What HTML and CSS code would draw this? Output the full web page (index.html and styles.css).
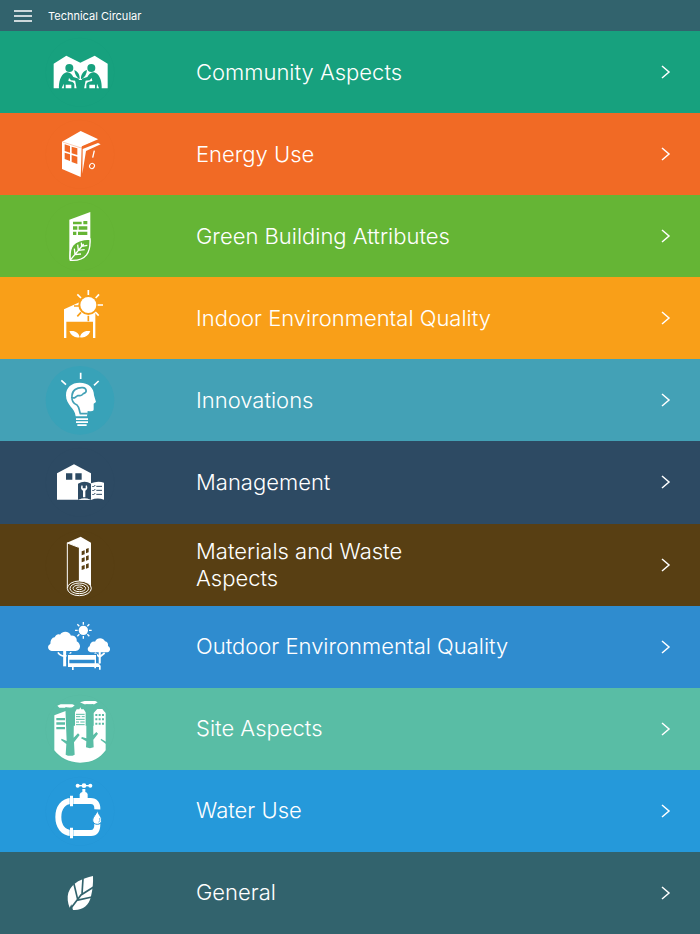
FILE: index.html
```html
<!DOCTYPE html>
<html lang="en">
<head>
  <meta charset="UTF-8">
  <meta name="viewport" content="width=device-width, initial-scale=1.0">
  <title>Technical Circular</title>
  <link rel="stylesheet" href="styles.css">
</head>
<body>
  <header class="topbar">
    <button class="menu-btn" type="button" aria-label="Menu">
      <svg width="20" height="14" viewBox="0 0 20 14">
        <path d="M1 2h18M1 7h18M1 12h18" stroke="#fff" stroke-width="1.5" />
      </svg>
    </button>
    <h1 class="title">Technical Circular</h1>
  </header>

  <main class="categories">
    <a class="category community" href="#community">
      <svg class="icon" viewBox="0 0 300 246">
        <circle class="badge" cx="150" cy="124" r="103" />
        <path class="fg" d="M71 172V98L109 74l42 21 43-21 39 24v74z" />
        <g class="bg">
          <circle cx="118" cy="111" r="12" />
          <circle cx="184" cy="111" r="12" />
          <path d="M87 174c-1-20 4-42 19-49 12-5 19 3 24 13l17 5-2 7-22-2-6-7-2 9c11 1 17 4 18 10v14h-9v-13h-17v13z" />
          <path d="M215 174c1-20-4-42-19-49-12-5-19 3-24 13l-17 5 2 7 22-2 6-7 2 9c-11 1-17 4-18 10v14h9v-13h17v13z" />
          <path d="M149 145c-10-7-15-17-16-28 11 5 17 14 16 28zM153 145c-1-14 6-24 18-28-1 13-7 23-18 28z" />
          <path d="M135 147h32l-5 27h-22z" />
        </g>
        <path class="fg" d="M102 172l-1-14-6 14zM200 172l1-14 6 14z" />
      </svg>
      <span class="label">Community Aspects</span>
      <svg class="chevron" viewBox="0 0 10 16"><path d="M1 2l7 6-7 6" /></svg>
    </a>

    <a class="category energy" href="#energy">
      <svg class="icon" viewBox="0 0 300 246">
        <circle class="badge" cx="150" cy="124" r="103" />
        <path class="fg" d="M96 86l56-32 53 25-49 21-4 92-56-24z" />
        <path class="line-bg" d="M98 87l53 17 53-24" stroke-width="1" />
        <path class="bg" d="M104 94l16 5v20l-16-5zM125 101l17 5v20l-17-5zM104 119l16 5v20l-16-6zM125 126l17 5v22l-17-6z" />
        <path class="bg" d="M155 102l49-17v12l-33 13-14 80h-2z" />
        <path class="fg" d="M158 108l46-18 8 4-44 20-11 68z" />
        <path class="line-fg" d="M193 113l-5 21" stroke-width="4" />
        <ellipse class="line-fg" cx="186" cy="159" rx="7" ry="8" stroke-width="3" transform="rotate(35 186 159)" />
      </svg>
      <span class="label">Energy Use</span>
      <svg class="chevron" viewBox="0 0 10 16"><path d="M1 2l7 6-7 6" /></svg>
    </a>

    <a class="category green" href="#green">
      <svg class="icon" viewBox="0 0 300 246">
        <circle class="badge" cx="150" cy="124" r="103" />
        <path class="fg" d="M118 74l63-23v90l-5 30-54 25-4-3z" />
        <path class="bg" d="M129 80h26v8h-26zM160 78h12v10h-12zM129 94h13v10h-13zM146 94h26v10h-26zM129 110h10v10h-10zM144 110h28v10h-28z" />
        <path class="leaf" d="M121 196c-4-40 5-61 59-64 2 39-10 67-59 64z" stroke-width="4" />
        <path class="line-fg" d="M122 194l39-47M135 179l-2-18M135 179l18-2M145 166l-2-17M145 166l19-2M155 154l-1-11M155 154l17-3" stroke-width="4" />
      </svg>
      <span class="label">Green Building Attributes</span>
      <svg class="chevron" viewBox="0 0 10 16"><path d="M1 2l7 6-7 6" /></svg>
    </a>

    <a class="category indoor" href="#indoor">
      <svg class="icon" viewBox="0 0 300 246">
        <path class="fg" d="M102 97l48-22 46 15v93h-7v-49h-80v49h-7z" />
        <circle class="bg" cx="175" cy="84" r="30" />
        <circle class="fg" cx="175" cy="84" r="24" />
        <path class="line-fg" d="M175 39v15M207 52l-10 11M219 84h-16M206 116l-10-11M142 52l11 11" stroke-width="5" />
        <path class="line-bg" d="M175 116v17M132 87h17M142 118l11-12" stroke-width="5" />
        <path class="fg" d="M118 163c17-3 28 4 31 18-14 3-25-4-31-18zM181 163c-17-3-28 4-31 18 14 3 25-4 31-18z" />
      </svg>
      <span class="label">Indoor Environmental Quality</span>
      <svg class="chevron" viewBox="0 0 10 16"><path d="M1 2l7 6-7 6" /></svg>
    </a>

    <a class="category innovations" href="#innovations">
      <svg class="icon" viewBox="0 0 300 246">
        <circle class="disc" cx="150" cy="124" r="103" />
        <path class="line-fg" d="M152 41v19M94 64l14 13M206 66l-14 13" stroke-width="5" />
        <path class="fg" d="M108 109c0-24 17-38 41-38 27 0 43 16 43 38l6 20-7 5v17c0 6-5 7-18 5l-2 16h-34c-2-25-29-33-29-63z" />
        <path class="cut" d="M173 164h-22c-5-15-3-19-10-26-12-5-17-14-15-29 1-15 14-24 32-23 12 1 14 14 4 17-5 2-5 7-12 7h-7l-10 7-10-2" stroke-width="5" />
        <path class="fg" d="M138 178h36v5h-36zM138 187h36v5h-36zM142 196h28v5h-28z" />
      </svg>
      <span class="label">Innovations</span>
      <svg class="chevron" viewBox="0 0 10 16"><path d="M1 2l7 6-7 6" /></svg>
    </a>

    <a class="category management" href="#management">
      <svg class="icon" viewBox="0 0 300 246">
        <circle class="badge" cx="150" cy="124" r="103" />
        <path class="fg" d="M81 176V97l51-27 51 27v79z" />
        <path class="bg" d="M108 97h19v19h-19zM136 97h19v19h-19z" />
        <path class="bg" d="M144 128q20-11 39 0v48q-20-7-39 0z" />
        <path class="fg" d="M183 127q20-9 39-2v51q-20-7-39 1zM146 176q18-7 35 0z" />
        <path class="fg" d="M155 133c-4 8-2 13 4 16v20h7v-20c6-3 8-8 4-16l-3 1v8h-9v-8z" />
        <path class="line-bg" d="M187 135l3 3 6-6M199 136h17M187 147l3 3 6-6M199 148h17M187 159l3 3 6-6M199 160h17" stroke-width="3" />
      </svg>
      <span class="label">Management</span>
      <svg class="chevron" viewBox="0 0 10 16"><path d="M1 2l7 6-7 6" /></svg>
    </a>

    <a class="category materials" href="#materials">
      <svg class="icon" viewBox="0 0 300 246">
        <circle class="badge" cx="150" cy="124" r="103" />
        <path class="fg" d="M111 56l41-18 31 18v138h-37V70z" />
        <path class="bg" d="M113 58l33 13v107l-33 14z" />
        <path class="line-fg" d="M112 56v137M112 57l34 13" stroke-width="3" />
        <path class="bg" d="M155 82l9-3v12l-9 3zM168 75l8-3v13l-8 3zM155 103l9-3v12l-9 3zM168 97l8-3v13l-8 3zM155 126l9-3v12l-9 3zM168 121l8-3v13l-8 3z" />
        <ellipse class="leaf" cx="148" cy="193" rx="36" ry="22" stroke-width="3" />
        <g class="line-fg" stroke-width="3">
          <ellipse cx="148" cy="193" rx="28" ry="16" />
          <ellipse cx="148" cy="193" rx="19" ry="10" />
          <ellipse cx="148" cy="193" rx="9" ry="4" />
        </g>
      </svg>
      <span class="label">Materials and Waste<br>Aspects</span>
      <svg class="chevron" viewBox="0 0 10 16"><path d="M1 2l7 6-7 6" /></svg>
    </a>

    <a class="category outdoor" href="#outdoor">
      <svg class="icon" viewBox="0 0 300 246">
        <circle class="fg" cx="160" cy="73" r="14" />
        <path class="line-fg" d="M160 48v8M160 90v8M135 73h8M177 73h8M142 55l6 6M178 55l-6 6M142 91l6-6M178 91l-6-6" stroke-width="4" />
        <path class="fg" d="M65 135c-13-2-14-17-4-21 0-12 5-19 13-20 4-8 10-11 16-8 9-13 28-10 33 3 12-2 19 9 17 17 14 7 14 27-3 29z" />
        <path class="fg" d="M182 139c-10-2-12-14-3-18 1-10 8-16 16-14 5-13 24-14 30-1 7 1 10 6 9 14 9 5 8 17-2 19z" />
        <path class="line-fg" d="M84 139q4 9 20 12M123 139q-3 9-19 12" stroke-width="5" />
        <path class="line-fg" d="M104 132v49" stroke-width="9" />
        <path class="line-fg" d="M209 135v36M194 141l15 12M224 141l-15 12" stroke-width="5" />
        <path class="bg" d="M110 143h91v28h-91z" />
        <path class="line-fg" d="M209 135v38" stroke-width="5" />
        <path class="fg" d="M114 147h84v14h-84zM114 161h4v12h-4zM194 161h4v12h-4zM114 172h91l7 7v12h-5v-8h-9v4h-5v-4h-62v9h-5v-9h-12z" />
      </svg>
      <span class="label">Outdoor Environmental Quality</span>
      <svg class="chevron" viewBox="0 0 10 16"><path d="M1 2l7 6-7 6" /></svg>
    </a>

    <a class="category site" href="#site">
      <svg class="icon" viewBox="0 0 300 246">
        <circle class="badge" cx="150" cy="124" r="103" />
        <path class="fg" d="M73 82l36-14v45h26V73l5-9h8l3-6 3 6h7l6 9v40h24V75l6-7 5-5h15l4 5 6 7v112c-18 24-38 36-77 37-34-1-61-16-77-37z" />
        <path class="fg" d="M82 53l10-4h35l7 3-8 7H88zM150 43l14-4h32l7 4-10 6h-30z" />
        <path class="bg" d="M106 57q14 4 26 0l-1 92 13-13 5 5-17 22 2 37q-13 7-27 0l2-32-16-12 2-4 15 7zM169 48q10 3 20 0l1 93 9-9 5 5-14 18 1 23q-11 5-23 0l1-18-16-9 3-4 13 4zM213 152l15 9v7l-16-12z" />
        <path class="bg" d="M79 90h26v7H79zM79 103h26v7H79zM79 117h26v7H79z" />
        <path class="line-bg" d="M138 79h26M138 86h13M155 86h9M138 94h26M138 102h9M151 102h13M138 110h26" stroke-width="3" />
        <path class="line-bg" d="M196 81h27M196 94h27M196 107h27" stroke-width="6" stroke-dasharray="6 4" />
      </svg>
      <span class="label">Site Aspects</span>
      <svg class="chevron" viewBox="0 0 10 16"><path d="M1 2l7 6-7 6" /></svg>
    </a>

    <a class="category water" href="#water">
      <svg class="icon" viewBox="0 0 300 246">
        <circle class="badge" cx="150" cy="124" r="103" />
        <path class="line-fg" d="M202 118c1-16-7-25-20-25h-57c-26 0-40 21-40 48s14 48 40 48h58c12 0 19-9 19-27" stroke-width="18" />
        <path class="line-bg" d="M119 79v28M130 79v28M119 175v28M130 175v28" stroke-width="1" />
        <path class="fg" d="M120 77h9v32h-9zM120 173h9v32h-9zM149 87V73q2-6 8-7V57h9v9q6 1 7 7v14z" />
        <circle class="fg" cx="143" cy="47" r="6" />
        <circle class="fg" cx="162" cy="47" r="7" />
        <circle class="fg" cx="181" cy="47" r="6" />
        <path class="line-fg" d="M143 47h38" stroke-width="4" />
        <path class="drop" d="M202 121c3 13 13 20 13 29s-6 13-13 13-14-4-14-13 11-16 14-29z" stroke-width="3" />
        <path class="line-bg" d="M209 144q3 8-3 13" stroke-width="2" />
      </svg>
      <span class="label">Water Use</span>
      <svg class="chevron" viewBox="0 0 10 16"><path d="M1 2l7 6-7 6" /></svg>
    </a>

    <a class="category general" href="#general">
      <svg class="icon" viewBox="0 0 300 246">
        <path class="fg" d="M189 72c-32 8-62 18-74 50-4 14-2 30 4 45l5-10 5 17c28 2 48-12 54-41 5-20 7-40 6-61z" />
        <path class="line-bg" d="M117 176l36-47 38-24M143 142l-11-46M156 126l3-46M140 145l46-10" stroke-width="5" />
      </svg>
      <span class="label">General</span>
      <svg class="chevron" viewBox="0 0 10 16"><path d="M1 2l7 6-7 6" /></svg>
    </a>
  </main>
</body>
</html>
```
FILE: styles.css
```css
* {
  box-sizing: border-box;
}

body {
  margin: 0;
  min-height: 100vh;
  display: flex;
  flex-direction: column;
  font-family: Inter, "Liberation Sans", sans-serif;
  color: #ffffff;
  background-color: #32636d;
}

/* Top bar */
.topbar {
  display: flex;
  align-items: center;
  gap: 15px;
  height: 31px;
  padding: 0 13px;
  background-color: #32636d;
}

.menu-btn {
  display: flex;
  padding: 0;
  border: none;
  background: none;
  cursor: pointer;
}

.title {
  margin: 0;
  font-size: 11px;
  font-weight: 400;
  line-height: 16px;
}

/* Category list */
.categories {
  flex: 1;
  display: grid;
  grid-auto-rows: 1fr;
}

.category {
  --row: #32636d;
  display: flex;
  align-items: center;
  padding: 0 29px 0 30px;
  background-color: var(--row);
  color: #ffffff;
  text-decoration: none;
}

.community { --row: #17a17e; }
.energy { --row: #f16a25; }
.green { --row: #65b535; }
.indoor { --row: #f99f18; }
.innovations { --row: #43a1b6; }
.management { --row: #2d4a63; }
.materials { --row: #583f13; }
.outdoor { --row: #2f8ccf; }
.site { --row: #59bda5; }
.water { --row: #2599da; }

.label {
  flex: 1;
  padding-left: 66px;
  font-size: 22px;
  font-weight: 300;
  line-height: 27px;
}

.chevron {
  width: 10px;
  height: 16px;
  fill: none;
  stroke: #ffffff;
  stroke-width: 1.5;
}

/* Icons */
.icon {
  flex: none;
  width: 100px;
  height: 82px;
}

.badge {
  fill: none;
  stroke: #000000;
  stroke-opacity: 0.04;
  stroke-width: 1;
}

.disc {
  fill: #38a2b8;
}

.fg {
  fill: #ffffff;
}

.bg {
  fill: var(--row);
}

.line-fg {
  fill: none;
  stroke: #ffffff;
}

.line-bg,
.cut {
  fill: none;
  stroke: var(--row);
}

.cut {
  stroke-linejoin: round;
}

.leaf {
  fill: var(--row);
  stroke: #ffffff;
}

.drop {
  fill: #ffffff;
  stroke: var(--row);
}
```
